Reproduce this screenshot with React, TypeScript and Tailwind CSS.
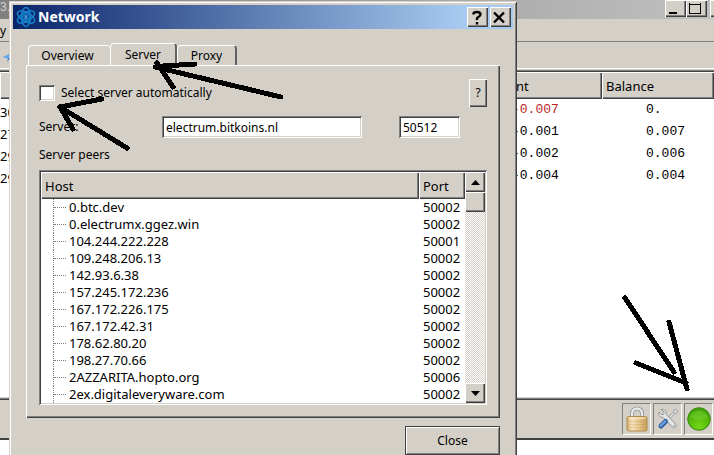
import { useState, type ReactNode } from "react";
import { clsx } from "clsx";

const raised =
  "bg-[#d4d0c8] shadow-[inset_1px_1px_#fff,inset_-1px_-1px_#404040,inset_-2px_-2px_#808080]";
const sunken =
  "shadow-[inset_1px_1px_#808080,inset_-1px_-1px_#fff,inset_2px_2px_#404040,inset_-2px_-2px_#d4d0c8]";

const history = [
  { day: "30", amount: "-0.007", balance: "0.", negative: true },
  { day: "27", amount: "-0.001", balance: "0.007" },
  { day: "29", amount: "-0.002", balance: "0.006" },
  { day: "29", amount: "-0.004", balance: "0.004" },
];

const peers = [
  { host: "0.btc.dev", port: 50002 },
  { host: "0.electrumx.ggez.win", port: 50002 },
  { host: "104.244.222.228", port: 50001 },
  { host: "109.248.206.13", port: 50002 },
  { host: "142.93.6.38", port: 50002 },
  { host: "157.245.172.236", port: 50002 },
  { host: "167.172.226.175", port: 50002 },
  { host: "167.172.42.31", port: 50002 },
  { host: "178.62.80.20", port: 50002 },
  { host: "198.27.70.66", port: 50002 },
  { host: "2AZZARITA.hopto.org", port: 50006 },
  { host: "2ex.digitaleveryware.com", port: 50002 },
];

const tabs = ["Overview", "Server", "Proxy"];

export default function App() {
  return (
    <div className="relative flex min-h-screen flex-col overflow-hidden bg-white font-['Noto_Sans',sans-serif] text-xs leading-[18px] text-black">
      <WalletWindow />
      <NetworkDialog />
      <Arrows />
    </div>
  );
}

function WalletWindow() {
  return (
    <div className="flex flex-1 flex-col pb-[15px]">
      <div className="flex h-[19px] justify-between bg-linear-to-r/srgb from-[#808080] to-[#c0c0c0]">
        <span className="font-['Liberation_Sans',sans-serif] leading-[14px] text-[#d4d0c8]">3.</span>
        <div className="-mr-[17px] flex h-[17px]">
          <TitleButton label="Minimize">
            <path d="M4 12h8" strokeWidth="2" />
          </TitleButton>
          <TitleButton label="Maximize">
            <path d="M3.500 2v10.500h11V2M3 3h12" />
          </TitleButton>
          <div className="w-[3px]" />
          <TitleButton label="Close window">
            <path d="M5 3l9 9M14 3l-9 9" strokeWidth="2" />
          </TitleButton>
        </div>
      </div>
      <div className="h-[23px] border-b border-[#808080] bg-[#d4d0c8] pt-[3px]">y</div>
      <div className="h-[26px] bg-[#d4d0c8] px-[3px] pt-[9px]">
        <svg width="12" height="12" viewBox="0 0 12 12">
          <path d="M0 6L12 0 9 11 5 8z" fill="#5aa9ee" />
          <path d="M5 8L12 0 4 11z" fill="#1d62b5" />
        </svg>
      </div>
      <div className="flex-1 border-t border-white bg-white">
        <div className="h-[3px] border-b border-[#404040] bg-[#d4d0c8]">
          <div className="h-[2px] border-b border-[#808080]" />
        </div>
        <table className="w-full table-fixed border-collapse">
          <colgroup>
            <col />
            <col className="w-[126px]" />
            <col className="w-[112px]" />
          </colgroup>
          <thead>
            <tr className="h-[27px] text-left text-[13px]">
              <th className={clsx(raised, "p-0")} />
              <th className={clsx(raised, "p-0 pl-10 font-normal")}>nt</th>
              <th className={clsx(raised, "p-0 pl-1 font-normal")}>Balance</th>
            </tr>
          </thead>
          <tbody>
            {history.map((row, i) => (
              <tr key={i} className="h-[22px] text-[13px]">
                <td className="p-0 pt-[3px]">{row.day}</td>
                <td
                  className={clsx(
                    "p-0 pl-9 font-['Liberation_Mono',monospace]",
                    row.negative && "text-[#bc1e1e]",
                  )}
                >
                  {row.amount}
                </td>
                <td className="p-0 pl-11 font-['Liberation_Mono',monospace]">{row.balance}</td>
              </tr>
            ))}
          </tbody>
        </table>
      </div>
      <div className="flex h-[43px] justify-end gap-[2px] border-t border-b-2 border-t-[#d4d0c8] border-b-[#404040] bg-[#d4d0c8] pr-px shadow-[inset_0_1px_#808080,inset_0_2px_#404040]">
        <StatusButton label="Password">
          <LockIcon />
        </StatusButton>
        <StatusButton label="Preferences">
          <ToolsIcon />
        </StatusButton>
        <StatusButton label="Network status">
          <ConnectedIcon />
        </StatusButton>
      </div>
    </div>
  );
}

function TitleButton({ label, children }: { label: string; children: ReactNode }) {
  return (
    <button type="button" aria-label={label} className={clsx(raised, "h-full w-[21px] overflow-hidden")}>
      <svg width="20" height="15" viewBox="0 0 20 15" fill="none" stroke="#000" shapeRendering="crispEdges">
        {children}
      </svg>
    </button>
  );
}

function StatusButton({ label, children }: { label: string; children: ReactNode }) {
  return (
    <button
      type="button"
      aria-label={label}
      className="mt-[5px] flex h-8 w-[29px] items-center justify-center border border-t-[#808080] border-r-white border-b-white border-l-[#808080]"
    >
      {children}
    </button>
  );
}

function NetworkDialog() {
  const [tab, setTab] = useState("Server");

  return (
    <section
      role="dialog"
      aria-label="Network"
      className="absolute top-px right-[197px] left-[9px] bg-[#d4d0c8] p-1 shadow-[inset_1px_1px_#d4d0c8,inset_-1px_-1px_#404040,inset_2px_2px_#fff,inset_-2px_-2px_#808080]"
    >
      <header className="flex h-6 items-center bg-linear-to-r/srgb from-[#0a246a] to-[#a6caf0] to-90% pr-[2px] pl-[3px]">
        <AtomIcon />
        <h1 className="ml-[2px] flex-1 text-sm font-bold text-white">Network</h1>
        <div className="flex gap-[2px]">
          <button type="button" aria-label="Help" className={clsx(raised, "h-5 w-[21px]")}>
            <svg width="20" height="19" viewBox="0 0 20 19" fill="none" stroke="#000" strokeWidth="2.4">
              <path d="M6.500 6.500V5.500Q7 4 10 4T13.500 6Q13.500 8 11.500 9T10 12M10 14v2.500" />
            </svg>
          </button>
          <button type="button" aria-label="Close dialog" className={clsx(raised, "h-5 w-[21px]")}>
            <svg width="20" height="19" viewBox="0 0 20 19" fill="none" stroke="#000" strokeWidth="2.4">
              <path d="M4 4.500l10 10M14 4.500l-10 10" />
            </svg>
          </button>
        </div>
      </header>

      <div className="flex flex-col px-[13px] pt-[14px] pb-2">
        <div role="tablist" className="flex h-[22px] items-end pl-[2px]">
          {tabs.map((name) => (
            <button
              key={name}
              type="button"
              role="tab"
              aria-selected={tab === name}
              onClick={() => setTab(name)}
              className={clsx(
                "rounded-t-sm border-t border-l border-white pt-px",
                tab === name ? "h-[22px]" : "h-5",
                name === "Overview" ? "w-[82px] pr-1" : "border-r-2 border-r-[#606060]",
                name === "Server" && "w-[67px]",
                name === "Proxy" && "w-[60px]",
              )}
            >
              {name}
            </button>
          ))}
        </div>

        <div
          role="tabpanel"
          className="px-[13px] pt-[14px] pb-[13px] shadow-[inset_1px_1px_#fff,inset_-1px_-1px_#404040,inset_-2px_-2px_#808080]"
        >
          <div className="flex items-center justify-between">
            <label className="flex items-center gap-[6px]">
              <input type="checkbox" className={clsx(sunken, "size-4 appearance-none bg-white")} />
              Select server automatically
            </label>
            <button type="button" className={clsx(raised, "h-7 w-[18px]")}>
              ?
            </button>
          </div>
          <div className="mt-[9px] flex items-center pr-[27px]">
            <label htmlFor="server" className="w-[123px]">
              Server:
            </label>
            <input
              id="server"
              defaultValue="electrum.bitkoins.nl"
              className={clsx(sunken, "h-[22px] min-w-0 flex-1 bg-white px-1")}
            />
            <input
              aria-label="Port"
              defaultValue="50512"
              className={clsx(sunken, "ml-[37px] h-[22px] w-[61px] bg-white px-1")}
            />
          </div>
          <p className="mt-2">Server peers</p>
          <PeerList />
        </div>

        <button
          type="button"
          className="mt-2 h-[29px] w-[95px] self-end border border-[#404040] shadow-[inset_1px_1px_#fff,inset_-1px_-1px_#808080]"
        >
          Close
        </button>
      </div>
    </section>
  );
}

function PeerList() {
  return (
    <div className={clsx(sunken, "mt-[6px] flex bg-white p-[2px] text-[13px]")}>
      <table className="flex-1 table-fixed border-collapse">
        <colgroup>
          <col />
          <col className="w-[46px]" />
        </colgroup>
        <thead>
          <tr className="h-[27px] text-left">
            <th className={clsx(raised, "p-0 pl-1 font-normal")}>Host</th>
            <th className={clsx(raised, "p-0 pl-1 font-normal")}>Port</th>
          </tr>
        </thead>
        <tbody>
          {peers.map((peer) => (
            <tr key={peer.host} className="h-[17px] leading-[17px]">
              <td className="p-0 pl-3">
                <div className="flex items-center border-l border-dotted border-[#808080]">
                  <span className="mr-[3px] w-3 border-t border-dotted border-[#808080]" />
                  {peer.host}
                </div>
              </td>
              <td className="p-0 pl-1">{peer.port}</td>
            </tr>
          ))}
        </tbody>
      </table>
      <div className="flex w-5 flex-col bg-[conic-gradient(#fff_25%,#d4d0c8_0_50%,#fff_0_75%,#d4d0c8_0)] bg-[length:2px_2px]">
        <button type="button" aria-label="Scroll up" className={clsx(raised, "flex h-5 items-center justify-center")}>
          <svg width="9" height="5" viewBox="0 0 9 5">
            <path d="M0 5L4.500 0 9 5z" />
          </svg>
        </button>
        <div className={clsx(raised, "h-5")} />
        <button
          type="button"
          aria-label="Scroll down"
          className={clsx(raised, "mt-auto flex h-5 items-center justify-center")}
        >
          <svg width="9" height="5" viewBox="0 0 9 5">
            <path d="M0 0h9L4.500 5z" />
          </svg>
        </button>
      </div>
    </div>
  );
}

function AtomIcon() {
  return (
    <svg width="20" height="22" viewBox="0 0 20 22" fill="none" stroke="#1583cf" strokeWidth="1.500">
      <ellipse cx="10" cy="11" rx="4.500" ry="9.500" />
      <ellipse cx="10" cy="11" rx="4.500" ry="9.500" transform="rotate(60 10 11)" />
      <ellipse cx="10" cy="11" rx="4.500" ry="9.500" transform="rotate(120 10 11)" />
      <circle cx="10" cy="11" r="3.500" fill="#0b4f94" strokeWidth="1" />
      <path d="M9 9v4M9 9.500h1.500v1.500H9h2v2H9" stroke="#4fb0ea" strokeWidth=".7" />
    </svg>
  );
}

function LockIcon() {
  return (
    <svg width="22" height="26" viewBox="0 0 22 26">
      <defs>
        <linearGradient id="brass" x1="0" x2="1">
          <stop offset="0" stopColor="#d2ab6c" />
          <stop offset=".25" stopColor="#f6e3be" />
          <stop offset=".6" stopColor="#e6c58c" />
          <stop offset="1" stopColor="#c89d5a" />
        </linearGradient>
      </defs>
      <path d="M6 12V7.500a5 5 0 0 1 10 0V12" fill="none" stroke="#8e9090" strokeWidth="4" />
      <path d="M6 12V7.500a5 5 0 0 1 10 0V12" fill="none" stroke="#e8eaea" strokeWidth="2.400" />
      <rect x="1" y="10.500" width="20" height="14.500" rx="1.500" fill="url(#brass)" stroke="#b08a4e" />
      <path d="M2.500 12h17" stroke="#fff0cf" />
      <path d="M3 15.500h16M3 18.500h16M3 21.500h16" stroke="#b98b45" strokeWidth=".7" opacity=".35" />
    </svg>
  );
}

function ToolsIcon() {
  return (
    <svg width="22" height="22" viewBox="0 0 22 22" fill="none" strokeLinecap="round">
      <path d="M18.500 3.500L10 12" stroke="#8d9193" strokeWidth="2.500" />
      <path d="M18.500 3.500L10 12" stroke="#eceeee" strokeWidth="1.200" />
      <circle cx="18.500" cy="3.500" r="2" fill="#d9dcdc" stroke="#95999b" strokeWidth=".8" />
      <path
        d="M4.500 1.500l2.700 2.700-.5 2-2 .5L2 4C1 6.500 2.500 9.500 6 9.300l10 10.200c1.200 1.200 4.300-1.300 3-3L9.300 6.500C9.800 3 7.500.8 4.500 1.500z"
        fill="#e3e6e6"
        stroke="#8b8f91"
        strokeWidth=".9"
      />
      <path d="M8.500 13.500L4 18" stroke="#2d5c9e" strokeWidth="5" />
      <path d="M8 13.500L3.800 17.700" stroke="#6d9fdd" strokeWidth="2.500" />
      <circle cx="17.300" cy="17.700" r=".8" fill="#777b7d" />
    </svg>
  );
}

function ConnectedIcon() {
  return (
    <svg width="24" height="24" viewBox="0 0 24 24">
      <defs>
        <radialGradient id="led" cx=".5" cy=".85" r=".8">
          <stop offset="0" stopColor="#74d816" />
          <stop offset="1" stopColor="#3fa304" />
        </radialGradient>
      </defs>
      <circle cx="12" cy="12" r="11.300" fill="url(#led)" stroke="#3c8413" />
      <path d="M3 10.500a9.200 8.500 0 0 1 18 0q-9 4.500-18 0z" fill="#8bdc4b" opacity=".35" />
    </svg>
  );
}

function Arrows() {
  return (
    <svg
      aria-hidden="true"
      className="pointer-events-none absolute top-0 left-0"
      width="714"
      height="455"
      viewBox="0 0 714 455"
      fill="none"
      stroke="#000"
      strokeWidth="5"
      strokeLinecap="round"
      strokeLinejoin="round"
      shapeRendering="crispEdges"
    >
      <path d="M281 97L155 67M163 66L195 64M157 63l16 24" />
      <path d="M127 148L60 107 102 99M60 107l13 22" />
      <path d="M625 298l49 74M669 322l18 67M636 363l50 20" />
    </svg>
  );
}
